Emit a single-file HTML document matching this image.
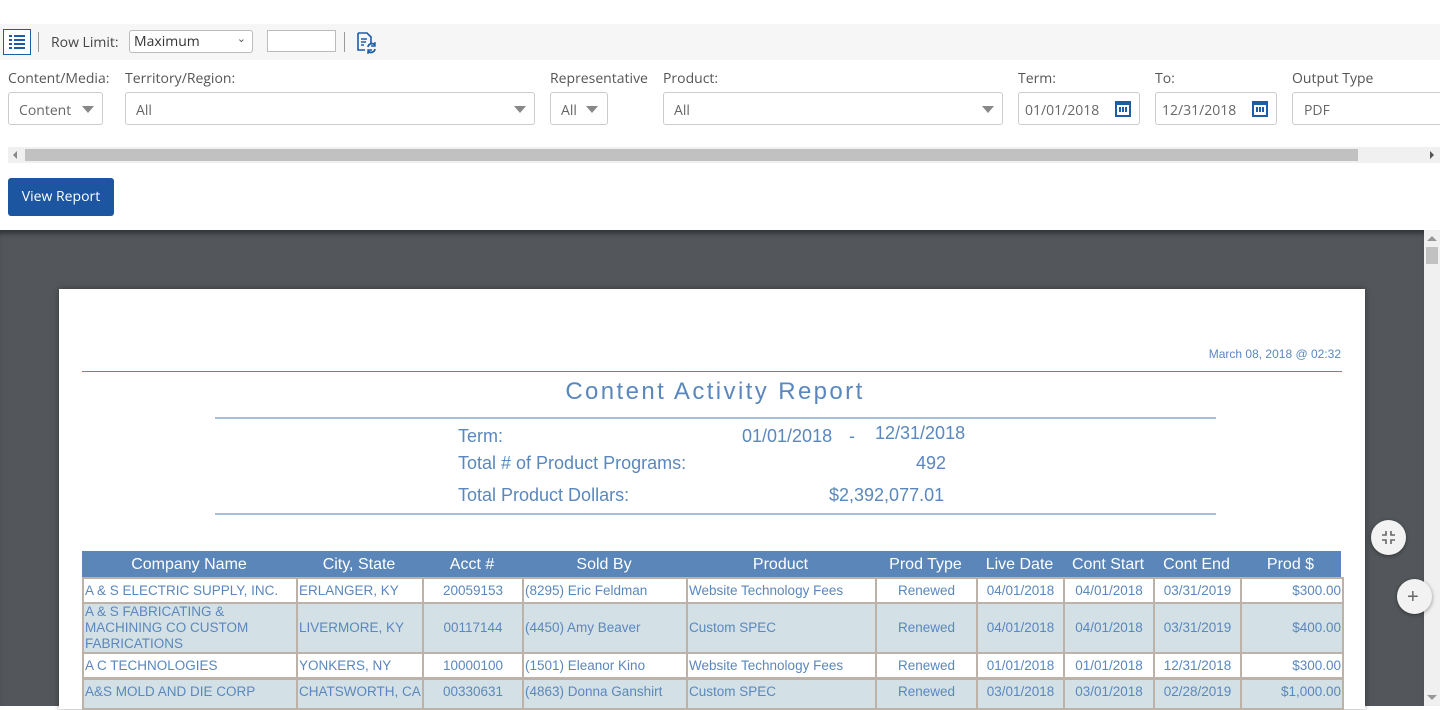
<!DOCTYPE html>
<html><head><meta charset="utf-8"><style>
*{box-sizing:border-box;margin:0;padding:0}
body{width:1440px;height:706px;overflow:hidden;background:#fff;font-family:"Open Sans","DejaVu Sans","Liberation Sans",sans-serif;position:relative;color:#555}
.a{position:absolute}
.lbl{font-size:14px;color:#555;top:69px}
.inp{border:1px solid #ccc;border-radius:3px;height:33px;top:92px;font-size:14px;color:#666;padding:8px 0 0 10px;background:#fff}
.tri{position:absolute;width:0;height:0;border-left:6px solid transparent;border-right:6px solid transparent;border-top:7px solid #888;top:13px}
.cal{position:absolute;right:8px;top:8px;width:16px;height:16px;border:2px solid #1d5da8;border-top-width:4px}
.cal:after{content:"";position:absolute;left:2px;top:2px;width:8px;height:5px;background:repeating-linear-gradient(90deg,#1d5da8 0 2px,transparent 2px 3px)}
.r{font-family:"Liberation Sans",Arial,sans-serif;color:#5a87bd}
.c{position:absolute;border:2px solid #bcb2a8;font-family:"Liberation Sans",Arial,sans-serif;color:#5a87bd;font-size:13.5px;line-height:16px;display:flex;align-items:center;padding:0 1px;overflow:hidden}
.h{position:absolute;top:552px;height:26px;color:#fff;font-family:"Liberation Sans",Arial,sans-serif;font-size:16px;text-align:center;line-height:26px}
</style></head><body>
<div class="a" style="left:0;top:24px;width:1440px;height:36px;background:#f6f6f6"></div>
<div class="a" style="left:3px;top:29px;width:28px;height:26px;border:1px solid #1d5da8;background:#fff"></div>
<svg class="a" style="left:9px;top:34px" width="16" height="16"><g fill="#1d5da8"><rect x="0" y="1" width="3" height="2"/><rect x="5" y="1" width="11" height="2"/><rect x="0" y="5" width="3" height="2"/><rect x="5" y="5" width="11" height="2"/><rect x="0" y="9" width="3" height="2"/><rect x="5" y="9" width="11" height="2"/><rect x="0" y="13" width="3" height="2"/><rect x="5" y="13" width="11" height="2"/></g></svg>
<div class="a" style="left:38px;top:32px;width:1px;height:20px;background:#999"></div>
<div class="a" style="left:51px;top:33px;font-size:14px;color:#444">Row Limit:</div>
<div class="a" style="left:129px;top:30px;width:124px;height:23px;border:1px solid #bbb;border-radius:3px;background:#fff;font-size:14px;color:#333;padding:1px 0 0 4px">Maximum<span style="position:absolute;right:6px;top:0;font-size:11px;color:#555">&#8964;</span></div>
<div class="a" style="left:267px;top:30px;width:69px;height:22px;border:1px solid #bbb;background:#fff"></div>
<div class="a" style="left:344px;top:32px;width:1px;height:20px;background:#999"></div>
<svg class="a" style="left:356px;top:32px" width="22" height="22"><path d="M2 1h9l4 4v6M2 1v17h7" fill="none" stroke="#1d5da8" stroke-width="1.6"/><path d="M5 7h6M5 10h5M5 13h3" stroke="#1d5da8" stroke-width="1.4"/><path d="M12 15a4 4 0 0 1 7-2M19 17a4 4 0 0 1-7 2" fill="none" stroke="#1d5da8" stroke-width="1.8"/><path d="M19 10v4h-4M12 22v-4h4" fill="none" stroke="#1d5da8" stroke-width="1.4"/></svg>

<div class="a lbl" style="left:8px">Content/Media:</div>
<div class="a lbl" style="left:125px">Territory/Region:</div>
<div class="a lbl" style="left:550px">Representative</div>
<div class="a lbl" style="left:663px">Product:</div>
<div class="a lbl" style="left:1018px">Term:</div>
<div class="a lbl" style="left:1155px">To:</div>
<div class="a lbl" style="left:1292px">Output Type</div>
<div class="a inp" style="left:8px;width:95px">Content<span class="tri" style="left:73px"></span></div>
<div class="a inp" style="left:125px;width:410px">All<span class="tri" style="left:388px"></span></div>
<div class="a inp" style="left:550px;width:58px">All<span class="tri" style="left:35px"></span></div>
<div class="a inp" style="left:663px;width:340px">All<span class="tri" style="left:318px"></span></div>
<div class="a inp" style="left:1018px;width:122px;padding-left:6px">01/01/2018<span class="cal"></span></div>
<div class="a inp" style="left:1155px;width:122px;padding-left:6px">12/31/2018<span class="cal"></span></div>
<div class="a inp" style="left:1292px;width:160px;padding-left:11px">PDF</div>

<div class="a" style="left:8px;top:147px;width:1432px;height:16px;background:#f0f0f0"></div>
<div class="a" style="left:25px;top:149px;width:1333px;height:12px;background:#c1c1c1"></div>
<div class="a" style="left:13px;top:151px;border-right:4px solid #888;border-top:4px solid transparent;border-bottom:4px solid transparent"></div>
<div class="a" style="left:1430px;top:151px;border-left:4px solid #555;border-top:4px solid transparent;border-bottom:4px solid transparent"></div>

<div class="a" style="left:8px;top:178px;width:106px;height:38px;background:#1d56a0;border-radius:3px;color:#fff;font-size:14px;text-align:center;line-height:38px">View Report</div>

<div class="a" style="left:0;top:230px;width:1424px;height:476px;background:#53575b;box-shadow:inset 0 6px 6px -3px #2c2f31"></div>
<div class="a" style="left:1424px;top:230px;width:16px;height:476px;background:#f0f0f0"></div>
<div class="a" style="left:1427px;top:236px;border-bottom:5px solid #999;border-left:5px solid transparent;border-right:5px solid transparent"></div>
<div class="a" style="left:1426px;top:247px;width:12px;height:17px;background:#c1c1c1"></div>
<div class="a" style="left:1427px;top:695px;border-top:5px solid #999;border-left:5px solid transparent;border-right:5px solid transparent"></div>

<div class="a" style="left:59px;top:289px;width:1306px;height:420px;background:#fff;box-shadow:0 0 6px rgba(0,0,0,.4)"></div>

<div class="a r" style="left:1150px;top:347px;width:191px;text-align:right;font-size:12px">March 08, 2018 @ 02:32</div>
<div class="a" style="left:82px;top:371px;width:1260px;height:1px;background:#5a87bd"></div>
<div class="a r" style="left:215px;top:378px;width:1000px;text-align:center;font-size:24px;letter-spacing:2.4px">Content Activity Report</div>
<div class="a" style="left:215px;top:417px;width:1001px;height:2px;background:#a9bfd9"></div>
<div class="a r" style="left:458px;top:426px;font-size:18px">Term:</div>
<div class="a r" style="left:742px;top:426px;font-size:18px">01/01/2018</div>
<div class="a r" style="left:849px;top:426px;font-size:18px">-</div>
<div class="a r" style="left:875px;top:423px;font-size:18px">12/31/2018</div>
<div class="a r" style="left:458px;top:453px;font-size:18px">Total # of Product Programs:</div>
<div class="a r" style="left:916px;top:453px;font-size:18px">492</div>
<div class="a r" style="left:458px;top:485px;font-size:18px">Total Product Dollars:</div>
<div class="a r" style="left:829px;top:485px;font-size:18px">$2,392,077.01</div>
<div class="a" style="left:215px;top:513px;width:1001px;height:2px;background:#a9bfd9"></div>

<div class="a" style="left:82px;top:551px;width:1259px;height:27px;background:#5a86ba"></div>
<div class="h" style="left:82px;width:214px">Company Name</div>
<div class="h" style="left:296px;width:126px">City, State</div>
<div class="h" style="left:422px;width:100px">Acct #</div>
<div class="h" style="left:522px;width:164px">Sold By</div>
<div class="h" style="left:686px;width:189px">Product</div>
<div class="h" style="left:875px;width:101px">Prod Type</div>
<div class="h" style="left:976px;width:87px">Live Date</div>
<div class="h" style="left:1063px;width:90px">Cont Start</div>
<div class="h" style="left:1153px;width:87px">Cont End</div>
<div class="h" style="left:1240px;width:101px">Prod $</div>

<div id="rows"></div>
<script>
var cols=[82,296,422,522,686,875,976,1063,1153,1240,1342];
var al=['l','l','c','l','l','c','c','c','c','r'];
var rows=[[577,25,'#fff',["A &amp; S ELECTRIC SUPPLY, INC.","ERLANGER, KY","20059153","(8295) Eric Feldman","Website Technology Fees","Renewed","04/01/2018","04/01/2018","03/31/2019","$300.00"]],
[602,50,'#d3e1e7',["A &amp; S FABRICATING &amp; MACHINING CO CUSTOM FABRICATIONS","LIVERMORE, KY","00117144","(4450) Amy Beaver","Custom SPEC","Renewed","04/01/2018","04/01/2018","03/31/2019","$400.00"]],
[652,25,'#fff',["A C TECHNOLOGIES","YONKERS, NY","10000100","(1501) Eleanor Kino","Website Technology Fees","Renewed","01/01/2018","01/01/2018","12/31/2018","$300.00"]],
[678,30,'#d3e1e7',["A&amp;S MOLD AND DIE CORP","CHATSWORTH, CA","00330631","(4863) Donna Ganshirt","Custom SPEC","Renewed","03/01/2018","03/01/2018","02/28/2019","$1,000.00"]]];
var h='';
rows.forEach(function(r){for(var i=0;i<10;i++){var j=al[i]=='l'?'flex-start':al[i]=='c'?'center':'flex-end';
var ai=(r[0]==678)?'flex-start;padding-top:4px':'center';
h+='<div class="c" style="left:'+cols[i]+'px;top:'+r[0]+'px;width:'+(cols[i+1]-cols[i]+2)+'px;height:'+(r[1]+2)+'px;background:'+r[2]+';justify-content:'+j+';align-items:'+ai+';text-align:'+(al[i]=='c'?'center':al[i]=='r'?'right':'left')+'"><span>'+r[3][i]+'</span></div>';}});
document.getElementById('rows').innerHTML=h;
</script>

<div class="a" style="left:1371px;top:520px;width:35px;height:35px;border-radius:50%;background:#f2f2f2;box-shadow:0 1px 4px rgba(0,0,0,.4)"></div>
<svg class="a" style="left:1381px;top:530px" width="15" height="15"><path d="M5 1v4H1M10 1v4h4M5 14v-4H1M10 14v-4h4" fill="none" stroke="#666" stroke-width="1.6"/></svg>
<div class="a" style="left:1397px;top:579px;width:35px;height:35px;border-radius:50%;background:#f2f2f2;box-shadow:0 1px 4px rgba(0,0,0,.4)"></div>
<div class="a" style="left:1407px;top:588px;font-size:20px;color:#666;line-height:18px;font-family:'Liberation Sans',sans-serif">+</div>
</body></html>
